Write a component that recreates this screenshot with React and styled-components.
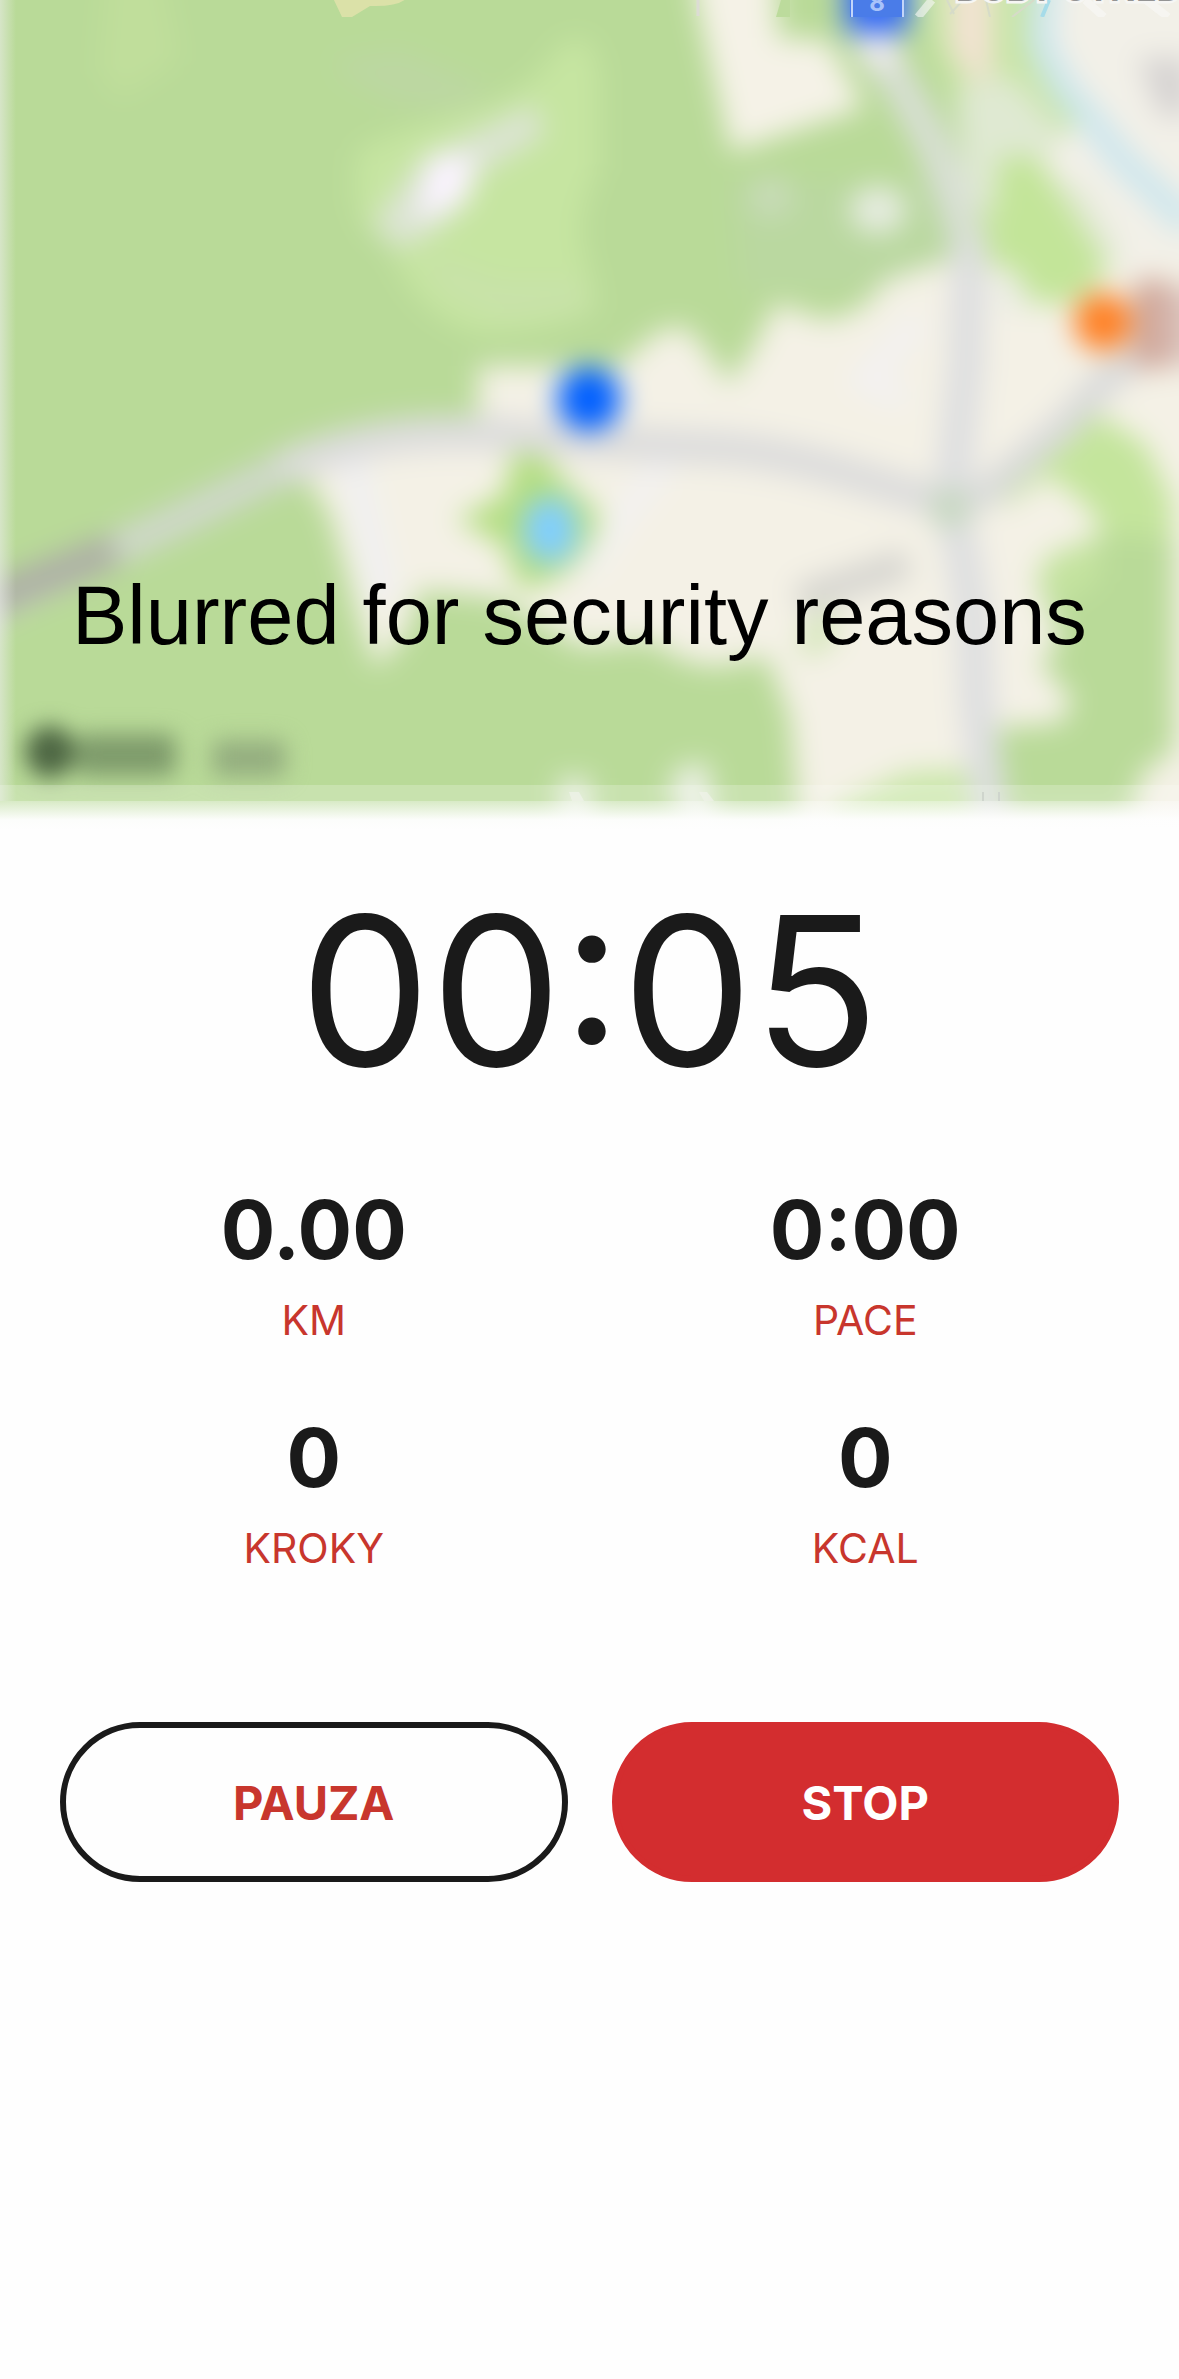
import React from 'react'
import styled, { createGlobalStyle } from 'styled-components';

const stats = [
  { value: "0.00", label: "KM" },
  { value: "0:00", label: "PACE" },
  { value: "0", label: "KROKY" },
  { value: "0", label: "KCAL" },
];

const App = () => {
  return (
    <>
      <GlobalStyle />
      <Screen>
        <MapContainer>
          <MapDrawing />
          <MapNotice>Blurred for security reasons</MapNotice>
        </MapContainer>
        <Panel>
          <Timer>00:05</Timer>
          <StatsGrid>
            {stats.map((item) => (
              <Stat key={item.label}>
                <dd>{item.value}</dd>
                <dt>{item.label}</dt>
              </Stat>
            ))}
          </StatsGrid>
          <ButtonRow>
            <Button type="button">PAUZA</Button>
            <Button type="button" $filled>STOP</Button>
          </ButtonRow>
        </Panel>
      </Screen>
    </>
  )
}

const MapDrawing = () => (
  <svg viewBox="0 0 1179 830" aria-hidden="true">
    <defs>
      <filter id="soft" filterUnits="userSpaceOnUse" x="-60" y="-60" width="1300" height="950" colorInterpolationFilters="sRGB">
        <feGaussianBlur stdDeviation="14" />
      </filter>
      <filter id="softer" filterUnits="userSpaceOnUse" x="-60" y="-60" width="1300" height="950" colorInterpolationFilters="sRGB">
        <feGaussianBlur stdDeviation="11" />
      </filter>
      <clipPath id="area"><rect width="1179" height="830" /></clipPath>
      <clipPath id="top"><rect width="1179" height="17" /></clipPath>
      <clipPath id="bottom"><rect y="785" width="1179" height="16" /></clipPath>
      <linearGradient id="fade" x1="0" y1="0" x2="0" y2="1">
        <stop offset="0" stopColor="#fefefe" stopOpacity="0.45" />
        <stop offset="0.65" stopColor="#fefefe" stopOpacity="0.97" />
        <stop offset="1" stopColor="#fefefe" />
      </linearGradient>
      <linearGradient id="edge">
        <stop offset="0" stopColor="#eeeeee" stopOpacity="0.55" />
        <stop offset="1" stopColor="#eeeeee" stopOpacity="0" />
      </linearGradient>
    </defs>
    <g clipPath="url(#area)">
      <rect width="1179" height="830" fill="#b9da98" />
      <g filter="url(#soft)">
        <rect x="-60" y="-60" width="1300" height="950" fill="#b9da98" />
        {/* forest */}
        <path d="M108 -40H160L180 60L120 100L98 70Z" fill="#c0de9b" />
        <path d="M330 60L400 50L495 90L460 110L400 105L350 80Z" fill="#bcd7a2" />
        <path d="M560 45Q600 20 600 90V170Q570 220 590 270L598 310Q550 335 480 335Q430 320 405 280L385 240Q345 230 358 150Q400 130 470 110Q530 95 560 45Z" fill="#c6e5a1" />
        <path d="M420 250L500 280L580 280L590 310L500 320L440 290Z" fill="#c8e2a9" />
        <path d="M372 224L422 158L534 104L546 134L478 174L448 222L400 250Z" fill="#dce4d4" />
        <path d="M430 154L476 156L468 202L416 222Z" fill="#faf3ff" />
        <path d="M730 180L940 180L950 260L860 290L740 290Z" fill="#bad8a0" />
        <circle cx="771" cy="197" r="22" fill="#c8dbb8" />
        <ellipse cx="878" cy="210" rx="28" ry="24" fill="#e6ece0" />
        {/* built-up land */}
        <path d="M690 -60L696 0L731 152L864 108L828 40L778 38L774 -60Z" fill="#f5f2e7" />
        <path d="M478 366L618 367L656 333L683 325L706 350L729 384L752 350L776 303L828 321L863 307L886 280L950 259L1000 240L1240 220V890H805L790 717L767 657L714 667L683 660L649 640L580 647L500 598L420 590L406 635L375 668L358 617L345 567L329 513L300 467L345 440L478 425Z" fill="#f4f1e6" />
        <path d="M1040 -60L1050 87L1000 100L1000 157L1038 157L1107 267H1240V-60Z" fill="#f2f0e8" />
        <path d="M895 -60L925 30L955 100L985 265L1012 267L1045 250L1038 157L1080 120L1050 87L1042 -60Z" fill="#c8e5a6" />
        <path d="M949 -60H993V75L975 85L949 50Z" fill="#f2e3d2" />
        <path d="M955 90L1010 75L1060 130L1050 157H1000V220L965 200Z" fill="#dfe9d2" />
        <path d="M1000 157H1038L1110 267L1080 301L1036 305L1012 267L989 263Z" fill="#c3e599" />
        <path d="M1045 170L1085 190L1120 250L1107 267Z" fill="#e2e9d5" />
        <path d="M1000 268L1012 267L1035 310H1000Z" fill="#e9ece3" />
        {/* parks on the right */}
        <path d="M1088 408L1145 444L1172 500V560H1036L1057 553L1103 533L1088 507L1050 475L1004 505L996 487Z" fill="#c4e59c" />
        <path d="M1103 533L1174 540V750L1142 773L1128 820H1000L996 728L1061 723L1073 700L1040 663L1061 640L1036 580L1060 570Z" fill="#b9da98" />
        <path d="M1038 572L1057 553L1103 533L1100 580L1055 610Z" fill="#c4e39f" />
        <path d="M830 810L905 772L980 768L990 830H830Z" fill="#cbe7ab" />
        <path d="M798 640L828 600L838 640L805 660Z" fill="#d3e6b8" />
        <path d="M520 425L560 476L600 515L588 552L555 580L520 590L503 545L456 519L503 496Z" fill="#b4de82" />
        <ellipse cx="550" cy="530" rx="27" ry="33" fill="#80ceff" />
        {/* river */}
        <path d="M1046 -40L1040 40Q1060 90 1085 112L1122 160L1190 225" fill="none" stroke="#cbe6ee" strokeWidth="26" />
        {/* streets */}
        <path d="M668 460L620 520L585 570M905 400L865 380L920 320" fill="none" stroke="#f2f1f2" strokeWidth="22" />
        <path d="M350 450L385 600" fill="none" stroke="#f0f0f2" strokeWidth="26" />
        <path d="M-30 616L77 567L172 523L287 467" fill="none" stroke="#d0d8cc" strokeWidth="32" />
        <path d="M280 470Q345 440 421 434Q480 430 536 438L695 447Q770 448 867 480L943 503" fill="none" stroke="#dcdcdc" strokeWidth="34" />
        <path d="M855 -30L878 50L905 93L931 140L954 200L970 250" fill="none" stroke="#d9dfd6" strokeWidth="34" />
        <path d="M868 30L888 66" stroke="#eeeaf0" strokeWidth="38" />
        <path d="M970 240L966 367L962 400L950 510L962 550L973 617L977 700L992 830" fill="none" stroke="#dddee0" strokeWidth="35" />
        <path d="M965 505L992 488L1066 425L1115 370L1190 330" fill="none" stroke="#d9dada" strokeWidth="30" />
        <circle cx="950" cy="508" r="20" fill="#c6d8c0" />
        {/* labels and markers */}
        <path d="M-20 604L50 575L115 550" fill="none" stroke="#adaea6" strokeWidth="33" />
        <path d="M798 600L908 563" fill="none" stroke="#d6d5d0" strokeWidth="30" />
        <path d="M1138 58H1190V116H1160Z" fill="#d6d3d2" />
        <rect x="1134" y="280" width="34" height="88" fill="#cfa699" />
        <rect x="1166" y="286" width="34" height="80" fill="#dac2bb" />
        <circle cx="1103" cy="322" r="29" fill="#ff8024" />
        <circle cx="589" cy="399" r="32" fill="#005fff" />
        <rect x="845" y="-50" width="64" height="83" rx="8" fill="#3269f4" />
        <path d="M558 778H590V840H564ZM668 782L686 764H708L718 840H688Z" fill="#ecf0e6" />
      </g>
      {/* map attribution, unreadable under the blur */}
      <g filter="url(#softer)">
        <ellipse cx="50" cy="752" rx="25" ry="26" fill="#4d6643" />
        <rect x="76" y="734" width="100" height="42" rx="8" fill="#7e9b6b" />
        <rect x="212" y="740" width="74" height="37" rx="8" fill="#94ae7f" />
      </g>
      {/* unblurred strip along the top */}
      <g clipPath="url(#top)">
        <path d="M333 -2H407Q398 7 370 6L352 17H342Z" fill="#dbe1a8" />
        <path d="M698 0V16" stroke="#dcdcd4" strokeWidth="3" />
        <path d="M781 0L776 17H790V0Z" fill="#bcdb9c" />
        <path d="M850 0H904V17H850Z" fill="#4a7ce8" />
        <path d="M852 0V17M903 0V17" stroke="#c3d5fa" strokeWidth="2" />
        <text x="877" y="11" fill="#a9c3fa" fontSize="24" fontWeight="700" textAnchor="middle">8</text>
        <path d="M932 0L918 17M1085 0L1104 17M1146 0L1168 17" stroke="#f8f8f7" strokeOpacity="0.6" strokeWidth="8" />
        <path d="M1049 0L1042 17" stroke="#a6dce9" strokeWidth="4" />
        <path d="M947 0L954 14M963 0L950 14M986 0L990 17M1034 0L1012 17" fill="none" stroke="#d6dbc8" strokeWidth="2" />
        <text x="956" y="1" fill="#949494" stroke="#f6f6f4" strokeWidth="5" paintOrder="stroke" fontSize="34" fontWeight="700">DOBY CTNED</text>
      </g>
      <rect width="16" height="801" fill="url(#edge)" />
      <rect y="785" width="1179" height="16" fill="#ffffff" fillOpacity="0.22" />
      <g clipPath="url(#bottom)">
        <path d="M569 792H579L584 801H572ZM699 792H707L714 801H704Z" fill="#eff2ea" fillOpacity="0.7" />
        <path d="M983 792V801M999 792V801" stroke="#cfd5cd" strokeWidth="2" />
      </g>
      <rect y="801" width="1179" height="29" fill="url(#fade)" />
    </g>
  </svg>
)

export default App;

const GlobalStyle = createGlobalStyle`
  * {
    box-sizing: border-box;
  }
  body {
    margin: 0;
    background-color: #fefefe;
    color: #1a1a1a;
    font-family: Inter, "Liberation Sans", sans-serif;
  }
`
const Screen = styled.main`
  min-height: 100vh;
  overflow: hidden;
`
const MapContainer = styled.section`
  position: relative;
  svg {
    display: block;
    width: 100%;
    height: auto;
  }
`
const MapNotice = styled.p`
  position: absolute;
  left: 0;
  right: 0;
  bottom: 168px;
  margin: 0;
  padding-left: 72px;
  color: #000;
  font-family: "Liberation Sans", Arial, sans-serif;
  font-size: 83px;
  line-height: 92px;
  white-space: nowrap;
`
const Panel = styled.section`
  display: flex;
  flex-direction: column;
  padding: 32px 60px 60px;
`
const Timer = styled.h1`
  margin: 0;
  font-size: 208px;
  font-weight: 400;
  line-height: 256px;
  text-align: center;
`
const StatsGrid = styled.dl`
  display: grid;
  grid-template-columns: 1fr 1fr;
  gap: 62px 44px;
  margin: 62px 0 0;
`
const Stat = styled.div`
  display: flex;
  flex-direction: column;
  align-items: center;
  gap: 14px;
  dd {
    margin: 0;
    font-size: 81px;
    font-weight: 700;
    line-height: 100px;
  }
  dt {
    color: #c8362d;
    font-size: 41px;
    line-height: 52px;
  }
`
const ButtonRow = styled.div`
  display: grid;
  grid-template-columns: 1fr 1fr;
  gap: 44px;
  margin-top: 148px;
`
export const Button = styled.button`
  height: 160px;
  border: 6px solid ${(p) => p.$filled ? '#d32d2f' : '#1a1a1a'};
  border-radius: 80px;
  background-color: ${(p) => p.$filled ? '#d32d2f' : '#fefefe'};
  color: ${(p) => p.$filled ? '#fff' : '#c8362d'};
  font-family: inherit;
  font-size: 47px;
  font-weight: 700;
  cursor: pointer;
`
